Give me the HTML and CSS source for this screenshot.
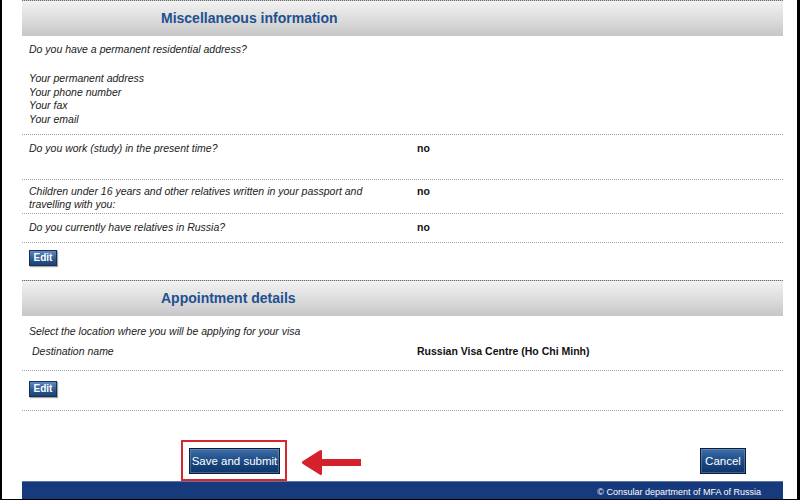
FILE: index.html
```html
<!DOCTYPE html>
<html lang="en">
<head>
<meta charset="utf-8">
<title>Visa application</title>
<link rel="stylesheet" href="styles.css">
</head>
<body>
<div class="page">
  <div class="content">
    <div class="sec-head"><h2>Miscellaneous information</h2></div>

    <div class="row row-address">
      <div class="label">
        <p>Do you have a permanent residential address?</p>
        <div class="sublist">
          <p>Your permanent address</p>
          <p>Your phone number</p>
          <p>Your fax</p>
          <p>Your email</p>
        </div>
      </div>
      <div class="value"></div>
    </div>

    <div class="row row-work">
      <div class="label">Do you work (study) in the present time?</div>
      <div class="value">no</div>
    </div>

    <div class="row row-children">
      <div class="label">Children under 16 years and other relatives written in your passport and travelling with you:</div>
      <div class="value">no</div>
    </div>

    <div class="row row-relatives">
      <div class="label">Do you currently have relatives in Russia?</div>
      <div class="value">no</div>
    </div>

    <div class="edit-row edit-row-1">
      <button class="edit-btn" type="button">Edit</button>
    </div>

    <div class="sec-head"><h2>Appointment details</h2></div>

    <div class="row row-location">
      <div class="label label-wide">Select the location where you will be applying for your visa</div>
      <div class="label label-dest">Destination name</div>
      <div class="value value-dest">Russian Visa Centre (Ho Chi Minh)</div>
    </div>

    <div class="edit-row edit-row-2">
      <button class="edit-btn" type="button">Edit</button>
    </div>

    <div class="actions">
      <div class="highlight">
        <button class="main-btn save-btn" type="button">Save and submit</button>
      </div>
      <svg class="arrow" width="60" height="27" viewBox="0 0 60 27" aria-hidden="true">
        <path d="M1.5 12.2 L19 1.2 Q21 0.2 21 2.5 L21 10 L60 10 L60 17 L21 17 L21 24.5 Q21 26.8 19 25.8 L1.5 14.8 Q0 13.5 1.5 12.2 Z" fill="#d4212b"/>
      </svg>
      <button class="main-btn cancel-btn" type="button">Cancel</button>
    </div>

    <div class="footer">© Consular department of MFA of Russia</div>
  </div>
</div>
</body>
</html>
```

FILE: styles.css
```css
html, body {
  margin: 0;
  padding: 0;
  background: #ffffff;
}

.page {
  width: 800px;
  height: 500px;
  box-sizing: border-box;
  border-left: 2px solid #000;
  border-right: 3px solid #000;
  border-bottom: 1px solid #000;
  overflow: hidden;
  font-family: "Liberation Sans", Arial, sans-serif;
  color: #222;
}

.content {
  margin-left: 20px;
  width: 761px;
}

.sec-head {
  height: 35px;
  border-top: 1px dotted #707070;
  background: linear-gradient(#f2f2f2, #d9d9d9 60%, #c6c6c6);
}

.sec-head h2 {
  margin: 0;
  padding-left: 139px;
  font-size: 14px;
  line-height: 35px;
  font-weight: bold;
  color: #21508f;
}

.row {
  display: grid;
  grid-template-columns: 395px 1fr;
  border-bottom: 1px dotted #a0a0a0;
  font-size: 10.5px;
  line-height: 13.5px;
}

.label {
  padding-left: 7px;
  width: 345px;
  font-style: italic;
  color: #222;
}

.label p {
  margin: 0;
}

.sublist {
  margin-top: 15.5px;
}

.value {
  font-weight: bold;
  color: #111;
}

.row-address { padding: 7.25px 0 7.25px; }
.row-work { padding: 7.25px 0 23.25px; }
.row-children { padding: 5.25px 0 1.25px; }
.row-relatives { padding: 7.25px 0 7.25px; }

.row-location {
  padding: 9.25px 0 11.25px;
  row-gap: 6.5px;
}

.label-wide {
  grid-column: 1 / 3;
  width: auto;
}

.label-dest {
  padding-left: 10px;
}

.edit-row {
  padding-left: 7px;
  display: flex;
}

.edit-row-1 { padding-top: 7px; padding-bottom: 14px; }
.edit-row-2 {
  padding-top: 10px;
  padding-bottom: 13px;
  border-bottom: 1px dotted #a0a0a0;
}

.edit-btn {
  width: 28px;
  height: 16px;
  padding: 0;
  margin: 0;
  border: 1px solid #1a2e4d;
  background: linear-gradient(#5b8ac4, #2c5a94 55%, #1b4377);
  color: #fff;
  font-family: "Liberation Sans", Arial, sans-serif;
  font-size: 10px;
  font-weight: bold;
  line-height: 14px;
  box-shadow: 1px 1px 1px rgba(0,0,0,0.35);
}

.actions {
  display: flex;
  align-items: flex-start;
  padding-left: 159px;
  margin-top: 29px;
  height: 41px;
}

.highlight {
  border: 2px solid #d8262e;
  padding: 6px 5px 5px 6px;
  height: 26px;
}

.main-btn {
  height: 26px;
  padding: 0;
  margin: 0;
  border: 1px solid #0b1d38;
  background: linear-gradient(#3f6ea9, #1c4a84 50%, #0c356a);
  color: #fff;
  font-family: "Liberation Sans", Arial, sans-serif;
  font-size: 11.5px;
  line-height: 24px;
  box-shadow: inset 0 0 0 1px rgba(150,180,220,0.35);
}

.save-btn {
  width: 91px;
}

.arrow {
  margin-left: 14px;
  margin-top: 9px;
}

.cancel-btn {
  width: 46px;
  margin-top: 8px;
  margin-left: auto;
  margin-right: 37px;
}

.footer {
  height: 17px;
  border-top: 1px solid #5f73a0;
  background: #173a7d;
  color: #fff;
  font-size: 9px;
  line-height: 20px;
  text-align: right;
  padding-right: 22px;
}
```
